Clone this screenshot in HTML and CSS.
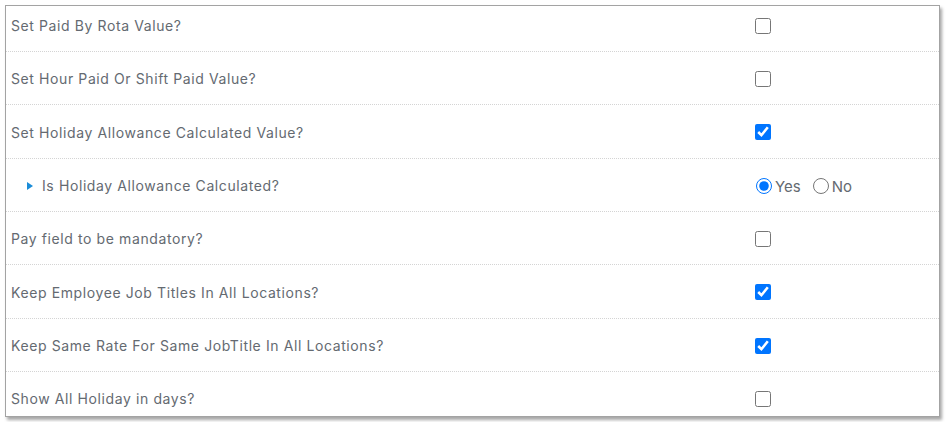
FILE: index.html
```html
<!DOCTYPE html>
<html>
<head>
<meta charset="utf-8">
<link rel="stylesheet" href="styles.css">
</head>
<body>
<div class="page">
  <div class="panel">
    <div class="list">
      <div class="row"><div class="label">Set Paid By Rota Value?</div><div class="ctrl"><input type="checkbox" class="chk"></div></div>
      <div class="row"><div class="label">Set Hour Paid Or Shift Paid Value?</div><div class="ctrl"><input type="checkbox" class="chk"></div></div>
      <div class="row"><div class="label">Set Holiday Allowance Calculated Value?</div><div class="ctrl"><input type="checkbox" class="chk" checked></div></div>
      <div class="row"><div class="label sub"><span class="tri"></span>Is Holiday Allowance Calculated?</div><div class="ctrl radios"><label class="opt"><input type="radio" name="hac" class="rad" checked>Yes</label><label class="opt"><input type="radio" name="hac" class="rad">No</label></div></div>
      <div class="row"><div class="label">Pay field to be mandatory?</div><div class="ctrl"><input type="checkbox" class="chk"></div></div>
      <div class="row"><div class="label">Keep Employee Job Titles In All Locations?</div><div class="ctrl"><input type="checkbox" class="chk" checked></div></div>
      <div class="row"><div class="label">Keep Same Rate For Same JobTitle In All Locations?</div><div class="ctrl"><input type="checkbox" class="chk" checked></div></div>
      <div class="row"><div class="label">Show All Holiday in days?</div><div class="ctrl"><input type="checkbox" class="chk"></div></div>
    </div>
  </div>
</div>
</body>
</html>
```
FILE: styles.css
```css
html, body {
  margin: 0;
  padding: 0;
  background: #ffffff;
}
.page {
  padding: 5px;
  width: 935px;
}
.panel {
  box-sizing: border-box;
  width: 935px;
  height: 412px;
  border: 1px solid #a3a3a3;
  box-shadow: 2px 3px 3px rgba(0, 0, 0, 0.35);
  background: #fff;
  overflow: hidden;
}
.list {
  margin-top: -7.33px;
}
.row {
  box-sizing: border-box;
  height: 53.33px;
  padding-top: 1.5px;
  display: grid;
  grid-template-columns: 1fr 187px;
  align-items: center;
  border-bottom: 1px dotted #d4d4d4;
  font-family: Inter, "Liberation Sans", sans-serif;
  font-size: 14px;
  color: #646a71;
}
.label {
  padding-left: 5px;
  display: flex;
  align-items: center;
  letter-spacing: 0.6px;
}
.label.sub {
  padding-left: 21px;
}
.tri {
  width: 0;
  height: 0;
  border-top: 4px solid transparent;
  border-bottom: 4px solid transparent;
  border-left: 6px solid #1a8cd8;
  margin-right: 9px;
}
.ctrl {
  display: flex;
  align-items: center;
}
.chk {
  width: 16px;
  height: 16px;
  margin: 0 0 0 3px;
  accent-color: #0075ff;
}
.radios {
  padding-top: 1px;
}
.opt {
  display: flex;
  align-items: center;
  font-size: 15px;
  margin-right: 12px;
}
.rad {
  width: 16px;
  height: 16px;
  margin: 0 3px 0 4px;
}
.opt + .opt .rad {
  margin-left: 0;
}
```
